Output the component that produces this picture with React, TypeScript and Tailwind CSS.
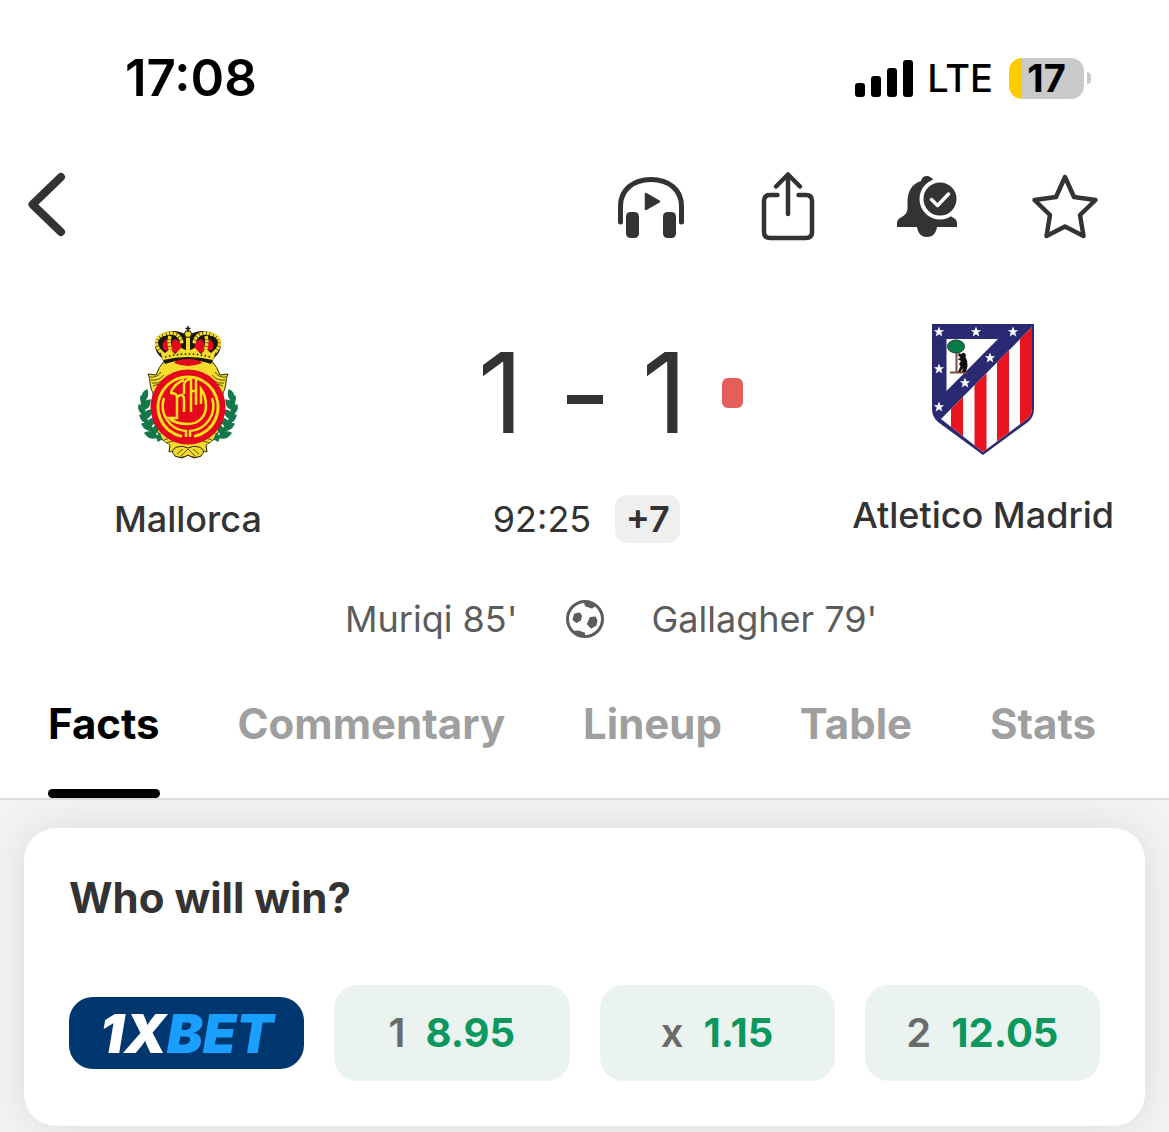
import { useState } from "react";

interface Odd {
  label: string;
  value: string;
}

const tabs = ["Facts", "Commentary", "Lineup", "Table", "Stats"];

const odds: Odd[] = [
  { label: "1", value: "8.95" },
  { label: "x", value: "1.15" },
  { label: "2", value: "12.05" },
];

const STAR = "M0 -5.5 L1.4 -1.8 L5.2 -1.8 L2.2 0.6 L3.3 4.5 L0 2.2 L-3.3 4.5 L-2.2 0.6 L-5.2 -1.8 L-1.4 -1.8 Z";

const crestStars = [
  [24, 22],
  [61, 22],
  [98, 22],
  [24, 59],
  [24, 97],
  [75, 48],
  [50, 73],
];

function StatusBar() {
  return (
    <div className="flex items-center justify-between pt-12 pr-[78px] pl-[125px]">
      <span className="text-[51px] leading-[60px] font-semibold">17:08</span>
      <div className="flex items-center">
        <svg width="58" height="37" viewBox="0 0 58 37" aria-hidden="true">
          <rect x="0" y="23" width="10" height="14" rx="3" />
          <rect x="16" y="16" width="10" height="21" rx="3" />
          <rect x="32" y="8" width="10" height="29" rx="3" />
          <rect x="48" y="0" width="10" height="37" rx="3" />
        </svg>
        <span className="ml-3.5 text-[38px] leading-[60px] font-medium">LTE</span>
        <div className="ml-4 flex h-[41px] w-[75px] items-center justify-center rounded-[13px] bg-linear-to-r from-[#ffcc00] from-[13px] to-[#cacaca] to-[13px] text-[38px] leading-[40px] font-bold">
          17
        </div>
        <div className="ml-[3px] h-3 w-1 rounded-r-full bg-[#cacaca]" />
      </div>
    </div>
  );
}

function Toolbar() {
  return (
    <div className="mt-[61px] flex items-center justify-between pr-[69px] pl-[23px] text-[#333]">
      <button type="button" aria-label="Back">
        <svg width="46" height="72" viewBox="0 0 46 72" fill="none" stroke="currentColor" strokeWidth="8" strokeLinecap="round" strokeLinejoin="round">
          <path d="M38 8 L9.500 35.500 L38 63" />
        </svg>
      </button>
      <div className="flex items-center gap-[66px]">
        <button type="button" aria-label="Listen">
          <svg width="70" height="72" viewBox="0 0 70 72" fill="currentColor">
            <path d="M4.500 53 V37 C4.500 21 17 10.500 35 10.500 S65.500 21 65.500 37 V53" fill="none" stroke="currentColor" strokeWidth="5" strokeLinecap="round" />
            <rect x="10" y="43" width="13" height="26" rx="4.500" />
            <rect x="47" y="43" width="13" height="26" rx="4.500" />
            <path d="M30 25 L43 32.500 L30 40 Z" stroke="currentColor" strokeWidth="2.500" strokeLinejoin="round" />
          </svg>
        </button>
        <button type="button" aria-label="Share">
          <svg width="72" height="72" viewBox="0 0 72 72" fill="none" stroke="currentColor" strokeWidth="4.500" strokeLinecap="round" strokeLinejoin="round">
            <path d="M25.500 26 H18 Q12 26 12 32 V63 Q12 69 18 69 H54 Q60 69 60 63 V32 Q60 26 54 26 H46.500" />
            <path d="M36 45 V5.500 M24 17.500 L36 5.500 L48 17.500" />
          </svg>
        </button>
        <button type="button" aria-label="Notifications on">
          <svg width="72" height="72" viewBox="0 0 72 72" fill="currentColor">
            <path d="M37 7 C33.500 7 31.500 9 31 12 C22 15 17.500 22 17.500 33 V39 C17.500 44 15 46 11 48.500 Q7 50.500 7 54 V58 H27 C28 65 32 68 37 68 S46 65 47 58 H67 V54 Q67 50 62 48 L57 44 L43 10.500 Q40.500 7 37 7 Z" />
            <circle cx="50" cy="30" r="18.500" stroke="white" strokeWidth="4" />
            <path d="M41.500 30.500 L47.500 36.500 L58.500 25" fill="none" stroke="white" strokeWidth="3.500" strokeLinecap="round" strokeLinejoin="round" />
          </svg>
        </button>
        <button type="button" aria-label="Favourite">
          <svg width="72" height="72" viewBox="0 0 72 72" fill="none" stroke="currentColor" strokeWidth="4.500" strokeLinejoin="round">
            <path d="M37 8 L46 28 L67.500 31 L52 46 L55.500 67 L37 57.500 L18.500 67 L22 46 L6.500 31 L28 28 Z" />
          </svg>
        </button>
      </div>
    </div>
  );
}

function LaurelBranch() {
  return (
    <g fill="#14784a" stroke="#14784a" strokeWidth="1.500" strokeLinejoin="round">
      <path d="M26 79 C18 92 22 110 39 125" fill="none" strokeWidth="3" />
      <path d="M27 76 Q20 79 24 87 Q29 83 27 76 Z" />
      <path d="M21 82 Q20 89 26 93 Q28 86 21 82 Z" />
      <path d="M30 86 Q23 87 23 95 Q30 95 30 86 Z" />
      <path d="M19 91 Q18 98 25 101 Q26 94 19 91 Z" />
      <path d="M31 96 Q23 97 24 105 Q32 103 31 96 Z" />
      <path d="M20 101 Q21 108 28 109 Q27 102 20 101 Z" />
      <path d="M34 104 Q26 106 28 113 Q35 111 34 104 Z" />
      <path d="M22 110 Q25 117 33 116 Q30 109 22 110 Z" />
      <path d="M38 111 Q30 114 32 121 Q40 118 38 111 Z" />
      <path d="M25 119 Q30 126 37 123 Q32 116 25 119 Z" />
      <path d="M43 118 Q36 120 38 127 Q44 125 43 118 Z" />
    </g>
  );
}

function MallorcaCrest() {
  return (
    <svg width="140" height="155" viewBox="-2 0 140 155" role="img" aria-label="Mallorca crest">
      {/* Cartouche behind the disc */}
      <path
        d="M45 46 Q38 54 36 61 L28 60 C31 66 29 72 33 79 L34 108 L40 124 L50 131 L49 138 Q55 136 55 142 L62 144 L68 141 L74 144 L81 142 Q81 136 87 138 L86 131 L96 124 L102 108 L103 79 C107 72 105 66 108 60 L100 61 Q98 54 91 46 Z"
        fill="#f3dc2a"
        stroke="#2d280f"
        strokeWidth="1"
      />
      <path d="M30 63 Q37 64 41 58 M31 66 Q39 67 44 61 M32 69 Q38 70 42 67 M33 72 L39 70 M106 63 Q99 64 95 58 M105 66 Q97 67 92 61 M104 69 Q98 70 94 67 M103 72 L97 70" fill="none" stroke="#5a500f" strokeWidth="1" />
      <LaurelBranch />
      <g transform="translate(136 0) scale(-1 1)">
        <LaurelBranch />
      </g>
      <path d="M40 118 Q42 128 51 131 L51 136 Q55 135 57 133 H79 Q81 135 85 136 L85 131 Q94 128 96 118 Z" fill="#f3dc2a" />
      <path d="M55 142 Q49 136 57 133 Q62 131 68 134 Q74 131 79 133 Q87 136 81 142 Q74 145 68 141 Q62 145 55 142 Z" fill="#f3dc2a" stroke="#2d280f" strokeWidth="1" />
      <path d="M57 140 L63 135 M61 142 L68 135 L75 142 M79 140 L73 135 M44 126 L50 124 M46 129 L53 127 M92 126 L86 124 M90 129 L83 127" fill="none" stroke="#5a500f" strokeWidth="1" />

      {/* Crown */}
      <path d="M42 44 C32 36 33 23 44 19 C53 15 61 18 68 21 C75 18 83 15 92 19 C103 23 104 36 94 44 L91 50 Q68 42 45 50 Z" fill="#1b170c" />
      <path d="M44 36 Q40 29 47 25 L50 37 Z M53 39 Q49 28 55 25 Q62 27 62 37 Z M92 36 Q96 29 89 25 L86 37 Z M83 39 Q87 28 81 25 Q74 27 74 37 Z" fill="#e10b20" />
      <path d="M41 38 C33 30 36 22 45 20 C54 17 61 21 62 30 M95 38 C103 30 100 22 91 20 C82 17 75 21 74 30 M50 22 Q48 29 51 37 M86 22 Q88 29 85 37" fill="none" stroke="#f3dc2a" strokeWidth="3.500" strokeDasharray="3 0.600" />
      <path d="M68 22 V40" stroke="#f3dc2a" strokeWidth="4" />
      <circle cx="68" cy="20" r="3.500" fill="#f3dc2a" stroke="#1b170c" strokeWidth="1" />
      <path d="M68 12 V18 M65.500 14.500 H70.500" stroke="#1b170c" strokeWidth="1.500" />
      <path d="M39 34 L45 39 L50 35 L55 40 L61 34 L68 37 L75 34 L81 40 L86 35 L91 39 L97 34 L93 46 Q68 40 43 46 Z" fill="#f3dc2a" />
      <path d="M45 43 Q68 37 91 43" fill="none" stroke="#1b170c" strokeWidth="1.500" strokeDasharray="1.500 2.500" />
      <path d="M54 49 Q57 45 68 45 Q79 45 82 49 Q68 55 54 49 Z" fill="#e10b20" />

      {/* Disc and monogram */}
      <circle cx="68" cy="93" r="37.500" fill="#e3061c" />
      <path d="M66 123 V117 A25 25 0 0 1 44 84 M70 123 V117 A25 25 0 0 0 92 84" fill="none" stroke="#ffe11b" strokeWidth="2.500" />
      <path d="M62 122.400 A30 30 0 1 1 74 122.400" fill="none" stroke="#ffe11b" strokeWidth="3" />
      <path d="M50 79 Q57 79 57 83 V104 H49 Q55 110 68 110 C79 110 86 102 86 92 C86 84 84 79 81 75 V90" fill="none" stroke="#ffe11b" strokeWidth="2.500" />
      <path d="M57 83 Q64 78 64 86 V98 M64 80 V70 Q66 65 71 65 V98 M71 77 H76 M76 65 V91 M51 78 Q55 69 64 66" fill="none" stroke="#ffe11b" strokeWidth="2.500" />
    </svg>
  );
}

function AtleticoCrest() {
  return (
    <svg width="140" height="155" viewBox="-2 0 140 155" role="img" aria-label="Atletico Madrid crest">
      <defs>
        <clipPath id="stripes">
          <path d="M117 17 V98 Q117 105 112 109 L68 142 L26 109 Z" />
        </clipPath>
      </defs>
      <path d="M17 14 H119 V99 Q119 107 113 112 L68 145 L23 112 Q17 107 17 99 Z" fill="#2a2a73" />
      <g clipPath="url(#stripes)">
        <rect x="17" y="14" width="105" height="132" fill="white" />
        <rect x="36" y="14" width="12" height="132" fill="#e8141f" />
        <rect x="59.500" y="14" width="12" height="132" fill="#e8141f" />
        <rect x="82" y="14" width="12" height="132" fill="#e8141f" />
        <rect x="105" y="14" width="13" height="132" fill="#e8141f" />
      </g>
      <path d="M31.500 29 H83 L31.500 81 Z" fill="white" />
      {/* Strawberry tree and bear */}
      <path d="M41.500 40 V62 M35 62.500 H52" stroke="#7a4c3a" strokeWidth="2" fill="none" />
      <ellipse cx="41" cy="36.500" rx="8.500" ry="6.500" fill="#087a45" stroke="#173e2d" strokeWidth="1" />
      <path d="M44 43 L46 44 L49 42.500 L51 45 L50.500 47 Q53 51 52.500 56 L51 62 H47 L48 58 L45.500 62 H43 L45.500 56 L44 54 L46 51 L42.500 49 L45.500 48 L43 45 Z" fill="#101010" />
      {crestStars.map(([x, y]) => (
        <path key={`${x}-${y}`} d={STAR} transform={`translate(${x} ${y})`} fill="white" />
      ))}
    </svg>
  );
}

function BallIcon() {
  return (
    <svg width="38" height="38" viewBox="0 0 38 38" fill="currentColor" aria-hidden="true">
      <circle cx="19" cy="19" r="17.500" fill="none" stroke="currentColor" strokeWidth="3" />
      <g stroke="currentColor" strokeWidth="2" strokeLinejoin="round">
        <path d="M9 14.500 L13.500 13.500 L15 16 L14 20 L10.500 22 L7.500 19.500 Z" />
        <path d="M24.500 18 L29 17.500 L30.500 20.500 L29.500 25 L25.500 27.500 L22 24 Z" />
        <path d="M19 3 H25 L29 5.500 L26 7.500 L20 5.500 Z" />
        <path d="M8 32 L12 31.500 L18 33.500 V35.500 L13 35 Z" />
      </g>
    </svg>
  );
}

function MatchHeader() {
  return (
    <section className="mt-[69px] text-[#333]">
      <div className="grid grid-cols-[9fr_10fr_9fr]">
        <div className="flex flex-col items-center pt-1">
          <MallorcaCrest />
          <span className="mt-7 text-4xl leading-[44px] font-medium">Mallorca</span>
        </div>
        <div className="flex flex-col items-center">
          <div className="relative mt-3.5 flex items-center pr-1 text-[112px] leading-[136px] font-normal">
            <span className="w-[60px] text-center">1</span>
            <span className="mt-3.5 mr-8 ml-9 h-[9px] w-9 bg-[#333]" />
            <span className="w-[60px] text-center">1</span>
            <span className="absolute top-[54px] -right-11 h-[30px] w-[21px] rounded-md bg-[#e55e5b]" />
          </div>
          <div className="mt-[35px] flex items-center gap-6 pl-1 text-4xl">
            <span>92:25</span>
            <span className="flex h-12 w-[65px] items-center justify-center rounded-xl bg-[#efefef] font-semibold">+7</span>
          </div>
        </div>
        <div className="flex flex-col items-center pl-1">
          <AtleticoCrest />
          <span className="mt-7 text-4xl leading-[44px] font-medium whitespace-nowrap">Atletico Madrid</span>
        </div>
      </div>
      <div className="mt-[51px] grid grid-cols-[1fr_auto_1fr] items-center gap-12 text-4xl leading-[50px] text-[#5c5c5c]">
        <span className="text-right">Muriqi 85'</span>
        <BallIcon />
        <span>Gallagher 79'</span>
      </div>
    </section>
  );
}

export default function App() {
  const [active, setActive] = useState("Facts");

  return (
    <div className="min-h-screen overflow-hidden bg-[#f3f3f3] font-['Inter','Liberation_Sans',sans-serif] text-black">
      <header className="border-b-2 border-[#dcdcdc] bg-white">
        <StatusBar />
        <Toolbar />
        <MatchHeader />
        <nav className="mt-[50px] flex justify-between pr-[73px] pl-12">
          {tabs.map((tab) => (
            <button
              key={tab}
              type="button"
              onClick={() => setActive(tab)}
              className={`flex flex-col items-center text-[42px] leading-[60px] font-bold ${active === tab ? "text-black" : "text-[#9f9f9f]"}`}
            >
              {tab}
              <span className={`mt-[35px] h-[9px] w-full rounded-full ${active === tab ? "bg-black" : ""}`} />
            </button>
          ))}
        </nav>
      </header>

      <main className="px-6 pt-7">
        <section className="rounded-[32px] bg-white px-[45px] pt-[42px] pb-[45px] shadow-[0_0_40px_rgba(0,0,0,0.10)]">
          <h2 className="text-[42px] leading-[56px] font-bold text-[#333]">Who will win?</h2>
          <div className="mt-[59px] grid grid-cols-4 items-center gap-[30px]">
            <a
              href="#bet"
              className="flex h-[72px] items-center justify-center rounded-3xl bg-[#00376f] text-[54px] font-black text-white italic"
            >
              1X<span className="text-[#1a9fff]">BET</span>
            </a>
            {odds.map((odd) => (
              <button
                key={odd.label}
                type="button"
                className="flex h-24 items-center justify-center gap-5 rounded-3xl bg-[#eaf3f0] text-[40px] font-bold"
              >
                <span className="font-semibold text-[#6b6b6b]">{odd.label}</span>
                <span className="text-[#0b985f]">{odd.value}</span>
              </button>
            ))}
          </div>
        </section>
      </main>
    </div>
  );
}
